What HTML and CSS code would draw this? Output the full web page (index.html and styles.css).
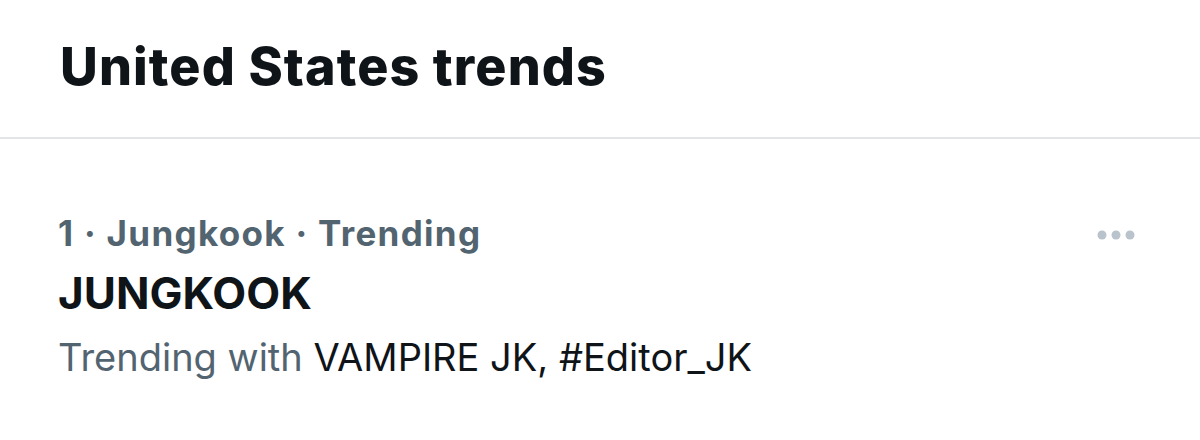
FILE: index.html
```html
<!DOCTYPE html>
<html>
<head>
<meta charset="utf-8">
<link rel="stylesheet" href="styles.css">
</head>
<body>
<div class="page">
  <header class="header">
    <h1 class="title">United States trends</h1>
  </header>
  <section class="trend">
    <div class="trend-body">
      <div class="meta">1 · Jungkook · Trending</div>
      <div class="name">JUNGKOOK</div>
      <div class="with"><span class="muted">Trending with</span> VAMPIRE JK, #Editor_JK</div>
    </div>
    <div class="more">
      <svg width="40" height="12" viewBox="0 0 40 12"><circle cx="6" cy="6" r="4.5" fill="#b9c3cc"/><circle cx="20" cy="6" r="4.5" fill="#b9c3cc"/><circle cx="34" cy="6" r="4.5" fill="#b9c3cc"/></svg>
    </div>
  </section>
</div>
</body>
</html>
```
FILE: styles.css
```css
html, body {
  margin: 0;
  padding: 0;
  background: #ffffff;
}
.page {
  width: 1200px;
  height: 440px;
  font-family: Inter, "Liberation Sans", sans-serif;
  color: #0f1419;
}
.header {
  height: 139px;
  border-bottom: 2px solid #e3e5e7;
  box-sizing: border-box;
  padding: 35px 0 0 60px;
}
.title {
  margin: 0;
  font-size: 52px;
  line-height: 64px;
  font-weight: 800;
  letter-spacing: 1.1px;
}
.trend {
  display: flex;
  justify-content: space-between;
  padding: 66px 0 0 58px;
}
.trend-body {
  display: flex;
  flex-direction: column;
}
.meta {
  font-size: 35px;
  line-height: 56px;
  font-weight: 700;
  letter-spacing: 1.3px;
  color: #536471;
}
.name {
  font-size: 44px;
  line-height: 64px;
  font-weight: 700;
}
.with {
  font-size: 38px;
  line-height: 60px;
  font-weight: 400;
  padding-top: 2px;
}
.muted {
  color: #536471;
}
.more {
  padding: 20px 64px 0 0;
}
```
